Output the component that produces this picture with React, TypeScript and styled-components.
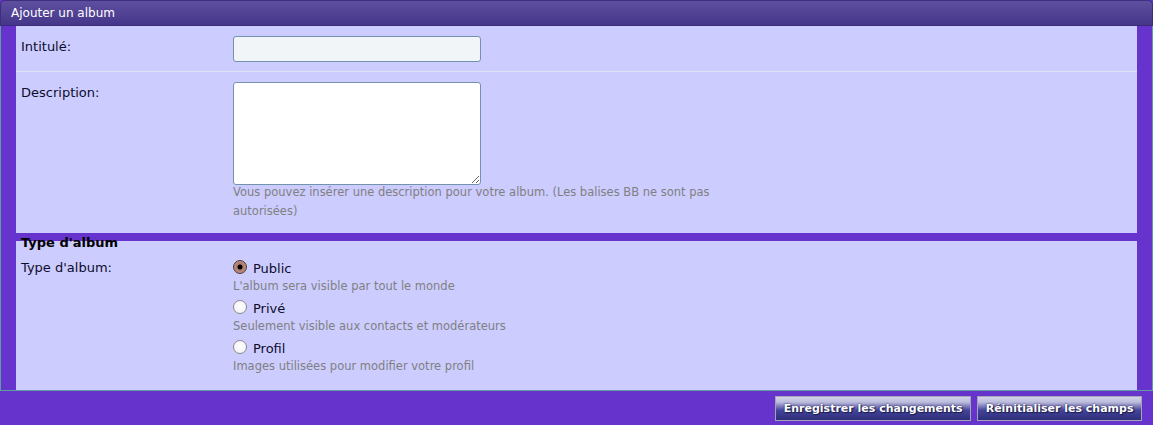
import React from "react";
import styled, { createGlobalStyle } from "styled-components";

const Global = createGlobalStyle`
  html, body { margin: 0; padding: 0; background: #6633cc; }
  body { font-family: "DejaVu Sans", Verdana, sans-serif; }
  * { box-sizing: border-box; }
`;

const Page = styled.div`
  width: 1153px;
  height: 425px;
  display: flex;
  flex-direction: column;
  background: #6633cc;
`;

const Header = styled.div`
  height: 26px;
  flex: none;
  padding: 0 10px;
  display: flex;
  align-items: center;
  color: #ffffff;
  font-size: 12px;
  background: linear-gradient(#5f4f9f, #45368a);
  border: 1px solid #3d2e80;
  border-bottom-color: #3a2a7a;
  border-radius: 5px 5px 0 0;
`;

const Body = styled.div`
  flex: none;
  display: flex;
  flex-direction: column;
  gap: 8px;
  padding: 0 15px;
  border: 1px solid #5f9ea0;
  border-top: none;
`;

const Section = styled.div<{ $padBottom?: number }>`
  display: flow-root;
  background: #ccccff;
  padding-bottom: ${(p) => p.$padBottom ?? 0}px;
`;

const SectionTitle = styled.div`
  margin: -6px 0 0 5px;
  font-size: 13px;
  line-height: 16px;
  font-weight: bold;
  color: #000000;
`;

const Row = styled.div<{ $pt: number; $pb: number; $sep?: boolean }>`
  display: grid;
  grid-template-columns: 212px 490px;
  padding: ${(p) => p.$pt}px 0 ${(p) => p.$pb}px 5px;
  border-bottom: ${(p) => (p.$sep ? "1px solid #dde3f0" : "none")};
`;

const Label = styled.div<{ $pt?: number }>`
  font-size: 13px;
  line-height: 16px;
  padding-top: ${(p) => p.$pt ?? 0}px;
  color: #0c0c2c;
`;

const Field = styled.div`
  display: flex;
  flex-direction: column;
`;

const TextInput = styled.input`
  display: block;
  width: 248px;
  height: 26px;
  margin: 0;
  padding: 2px 4px;
  font-family: "DejaVu Sans", Verdana, sans-serif;
  font-size: 13px;
  background: #f2f5f8;
  border: 1px solid #7292ae;
  border-radius: 3px;
  outline: none;
  caret-color: #000;
`;

const TextArea = styled.textarea`
  display: block;
  width: 248px;
  height: 103px;
  margin: 0;
  padding: 3px 4px;
  font-family: "DejaVu Sans", Verdana, sans-serif;
  font-size: 13px;
  background: #ffffff;
  border: 1px solid #7292ae;
  border-radius: 3px;
  outline: none;
`;

const Help = styled.div<{ $lh: number; $mt?: number }>`
  font-size: 11.5px;
  line-height: ${(p) => p.$lh}px;
  margin-top: ${(p) => p.$mt ?? 0}px;
  color: #808080;
`;

const Options = styled.div`
  display: flex;
  flex-direction: column;
  gap: 6px;
`;

const Option = styled.div`
  display: flex;
  flex-direction: column;
`;

const OptionLine = styled.label`
  display: flex;
  align-items: flex-start;
  gap: 6px;
  font-size: 13px;
  line-height: 18px;
  color: #0c0c2c;
`;

const Radio = styled.span<{ $checked?: boolean }>`
  flex: none;
  width: 14px;
  height: 14px;
  border-radius: 50%;
  border: 1px solid ${(p) => (p.$checked ? "#4a3a3a" : "#8a8a8a")};
  background: ${(p) =>
    p.$checked
      ? "radial-gradient(circle, #000 0 2.2px, #a8786a 2.8px, #c9a090 100%)"
      : "radial-gradient(circle at 50% 40%, #ffffff, #f0f0f0)"};
`;

const Footer = styled.div`
  flex: 1;
  display: flex;
  justify-content: flex-end;
  align-items: flex-start;
  gap: 6px;
  padding: 5px 11px 0 0;
`;

const Button = styled.button`
  height: 25px;
  padding: 0 7.5px;
  font-family: "DejaVu Sans", Verdana, sans-serif;
  font-size: 11px;
  font-weight: bold;
  color: #ffffff;
  text-shadow: 0 0 2px #1a1a4a, 1px 1px 1px #1a1a4a;
  border: 1px solid #a4a4b4;
  background: linear-gradient(#d2d2ee 0%, #bcbcdc 22%, #44449a 58%, #2e2e7c 100%);
  cursor: pointer;
`;

const radios = [
  { label: "Public", help: "L'album sera visible par tout le monde", checked: true },
  { label: "Privé", help: "Seulement visible aux contacts et modérateurs" },
  { label: "Profil", help: "Images utilisées pour modifier votre profil" },
];

export default function App() {
  return (
    <Page>
      <Global />
      <Header>Ajouter un album</Header>
      <Body>
        <Section>
          <Row $pt={10} $pb={9} $sep>
            <Label $pt={3}>Intitulé:</Label>
            <Field>
              <TextInput autoFocus />
            </Field>
          </Row>
          <Row $pt={10} $pb={12}>
            <Label $pt={3}>Description:</Label>
            <Field>
              <TextArea />
              <Help $lh={19} $mt={-2}>
                Vous pouvez insérer une description pour votre album. (Les balises BB ne sont
                pas autorisées)
              </Help>
            </Field>
          </Row>
        </Section>
        <Section $padBottom={16}>
          <SectionTitle>Type d'album</SectionTitle>
          <Row $pt={9} $pb={0}>
            <Label>Type d'album:</Label>
            <Options>
              {radios.map((r) => (
                <Option key={r.label}>
                  <OptionLine>
                    <Radio $checked={r.checked} />
                    {r.label}
                  </OptionLine>
                  <Help $lh={16}>{r.help}</Help>
                </Option>
              ))}
            </Options>
          </Row>
        </Section>
      </Body>
      <Footer>
        <Button>Enregistrer les changements</Button>
        <Button>Réinitialiser les champs</Button>
      </Footer>
    </Page>
  );
}
